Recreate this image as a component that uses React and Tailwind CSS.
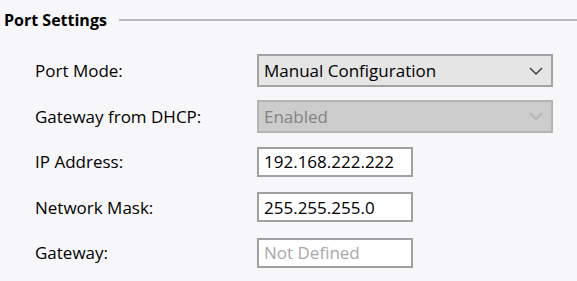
const labelClass = 'w-[222px] shrink-0 text-[17px] text-[#000000]'

function Select({ value, disabled }) {
  return (
    <div
      className={`flex h-[33px] w-[296px] items-center justify-between border-2 pl-[5px] pr-[8px] text-[17px] ${
        disabled
          ? 'border-[#b4b4b4] bg-[#cccccc] text-[#838383]'
          : 'border-[#a3a3a3] bg-[#e5e5e5] text-[#000000]'
      }`}
    >
      <span>{value}</span>
      <svg width="14" height="8" viewBox="0 0 14 8" fill="none">
        <path
          d="M1 1l6 6 6-6"
          stroke={disabled ? '#b0b0b0' : '#404040'}
          strokeWidth="1.5"
        />
      </svg>
    </div>
  )
}

function TextBox({ value, placeholder }) {
  return (
    <div className="flex h-[30px] w-[156px] items-center border-2 border-[#a0a0a0] bg-white pl-[5px] text-[17px]">
      {value ? (
        <span className="text-[#000000]">{value}</span>
      ) : (
        <span className="text-[#a8a8a8]">{placeholder}</span>
      )}
    </div>
  )
}

function App() {
  return (
    <main
      className="h-[281px] w-[577px] overflow-hidden bg-[#f7f7f9]"
      style={{ fontFamily: '"Open Sans", "Noto Sans", sans-serif' }}
    >
      <div className="flex h-[40px] items-center gap-[12px] pl-[4px]">
        <h2 className="text-[16px] font-bold text-[#000000]">Port Settings</h2>
        <div className="h-[2px] flex-1 bg-[#b8b8b8]" />
      </div>

      <div className="mt-[8px] grid auto-rows-[45.5px] pl-[35px]">
        <div className="flex items-center">
          <span className={labelClass}>Port Mode:</span>
          <Select value="Manual Configuration" />
        </div>
        <div className="flex items-center">
          <span className={labelClass}>Gateway from DHCP:</span>
          <Select value="Enabled" disabled />
        </div>
        <div className="flex items-center">
          <span className={labelClass}>IP Address:</span>
          <TextBox value="192.168.222.222" />
        </div>
        <div className="flex items-center">
          <span className={labelClass}>Network Mask:</span>
          <TextBox value="255.255.255.0" />
        </div>
        <div className="flex items-center">
          <span className={labelClass}>Gateway:</span>
          <TextBox placeholder="Not Defined" />
        </div>
      </div>
    </main>
  )
}

export default App
